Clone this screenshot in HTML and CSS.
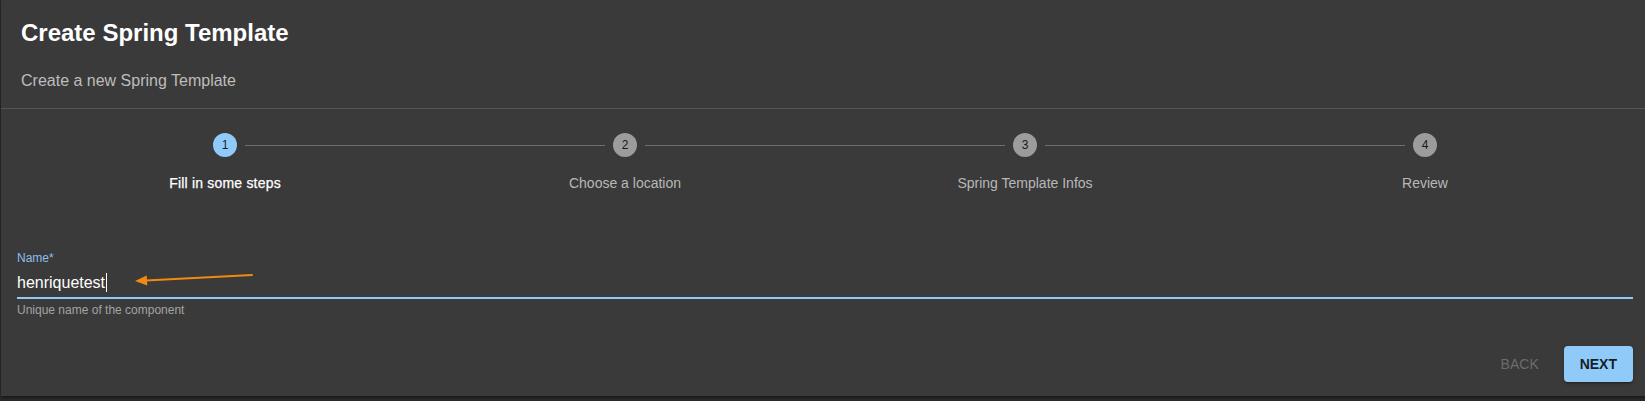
FILE: index.html
```html
<!DOCTYPE html>
<html lang="en">
<head>
<meta charset="utf-8">
<title>Create Spring Template</title>
<link rel="stylesheet" href="styles.css">
</head>
<body>
<div class="panel">
  <header class="head">
    <h1 class="title">Create Spring Template</h1>
    <p class="subtitle">Create a new Spring Template</p>
  </header>
  <div class="divider"></div>
  <ol class="stepper">
    <li class="step active">
      <div class="track"><span class="seg seg-none"></span><span class="dot">1</span><span class="seg"></span></div>
      <span class="step-label">Fill in some steps</span>
    </li>
    <li class="step">
      <div class="track"><span class="seg"></span><span class="dot">2</span><span class="seg"></span></div>
      <span class="step-label">Choose a location</span>
    </li>
    <li class="step">
      <div class="track"><span class="seg"></span><span class="dot">3</span><span class="seg"></span></div>
      <span class="step-label">Spring Template Infos</span>
    </li>
    <li class="step">
      <div class="track"><span class="seg"></span><span class="dot">4</span><span class="seg seg-none"></span></div>
      <span class="step-label">Review</span>
    </li>
  </ol>
  <div class="form">
    <div class="field">
      <label class="field-label">Name*</label>
      <div class="field-input"><span class="value">henriquetest</span><span class="caret"></span></div>
      <p class="helper">Unique name of the component</p>
      <svg class="annot-arrow" width="140" height="26" viewBox="0 0 140 26">
        <line x1="125" y1="9" x2="19" y2="14.5" stroke="#f08a10" stroke-width="2" stroke-linecap="round"/>
        <polygon points="8,15 19.7,9.4 20.3,19.6" fill="#f08a10"/>
      </svg>
    </div>
    <div class="actions">
      <button class="btn btn-back" disabled>BACK</button>
      <button class="btn btn-next">NEXT</button>
    </div>
  </div>
</div>
</body>
</html>
```
FILE: styles.css
```css
html, body {
  margin: 0;
  padding: 0;
  overflow: hidden;
}
body {
  background: #2c2c2c;
  font-family: "Liberation Sans", Arial, Helvetica, sans-serif;
  width: 1645px;
  height: 401px;
}
.panel {
  margin-left: 1px;
  width: 1648px;
  background: #3a3a3a;
  box-shadow: 0 2px 3px rgba(0,0,0,0.45);
  padding-bottom: 14px;
}
.head {
  padding: 17px 20px 15px;
}
.title {
  margin: 0;
  font-size: 24px;
  line-height: 32px;
  font-weight: 700;
  color: #ffffff;
}
.subtitle {
  margin: 20px 0 0;
  font-size: 16px;
  line-height: 24px;
  color: #bdbdbd;
}
.divider {
  height: 1px;
  background: #545454;
}
.stepper {
  list-style: none;
  margin: 0;
  padding: 24px 24px 0;
  display: grid;
  grid-template-columns: repeat(4, 1fr);
}
.step {
  display: flex;
  flex-direction: column;
  align-items: center;
}
.track {
  display: flex;
  align-items: center;
  width: 100%;
  height: 24px;
}
.seg {
  flex: 1;
  height: 1px;
  background: #6e6e6e;
}
.seg-none {
  background: transparent;
}
.dot {
  width: 24px;
  height: 24px;
  margin: 0 8px;
  border-radius: 50%;
  background: #9c9c9c;
  color: rgba(0,0,0,0.87);
  font-size: 12px;
  line-height: 24px;
  text-align: center;
}
.active .dot {
  background: #90caf9;
}
.step-label {
  margin-top: 16px;
  font-size: 14px;
  line-height: 20px;
  color: #b8b8b8;
}
.active .step-label {
  color: #ffffff;
  letter-spacing: 0.2px;
  -webkit-text-stroke: 0.25px #ffffff;
}
.form {
  padding: 57px 16px 0;
}
.field {
  position: relative;
}
.field-label {
  display: block;
  font-size: 12px;
  line-height: 16px;
  color: #8dbcec;
}
.field-input {
  margin-top: 1px;
  display: flex;
  align-items: center;
  padding: 4px 0 3px;
  height: 23px;
  border-bottom: 2px solid #90caf9;
  font-size: 16px;
  line-height: 23px;
  color: #ffffff;
}
.caret {
  width: 1px;
  height: 19px;
  margin-left: 1px;
  background: #ffffff;
}
.helper {
  margin: 3px 0 0;
  font-size: 12px;
  line-height: 16px;
  color: #a3a3a3;
}
.annot-arrow {
  position: absolute;
  left: 110px;
  top: 16px;
}
.actions {
  display: flex;
  justify-content: flex-end;
  gap: 12px;
  margin-top: 28px;
}
.btn {
  font-family: inherit;
  font-size: 14px;
  line-height: 24px;
  border: 0;
  border-radius: 4px;
  min-width: 64px;
  height: 36px;
  cursor: pointer;
}
.btn-back {
  background: transparent;
  color: #6c6c6c;
  font-weight: 400;
  padding: 6px 8px;
}
.btn-next {
  background: #90caf9;
  color: rgba(0,0,0,0.87);
  font-weight: 700;
  padding: 6px 16px;
  box-shadow: 0 3px 1px -2px rgba(0,0,0,0.2), 0 2px 2px 0 rgba(0,0,0,0.14), 0 1px 5px 0 rgba(0,0,0,0.12);
}
```
